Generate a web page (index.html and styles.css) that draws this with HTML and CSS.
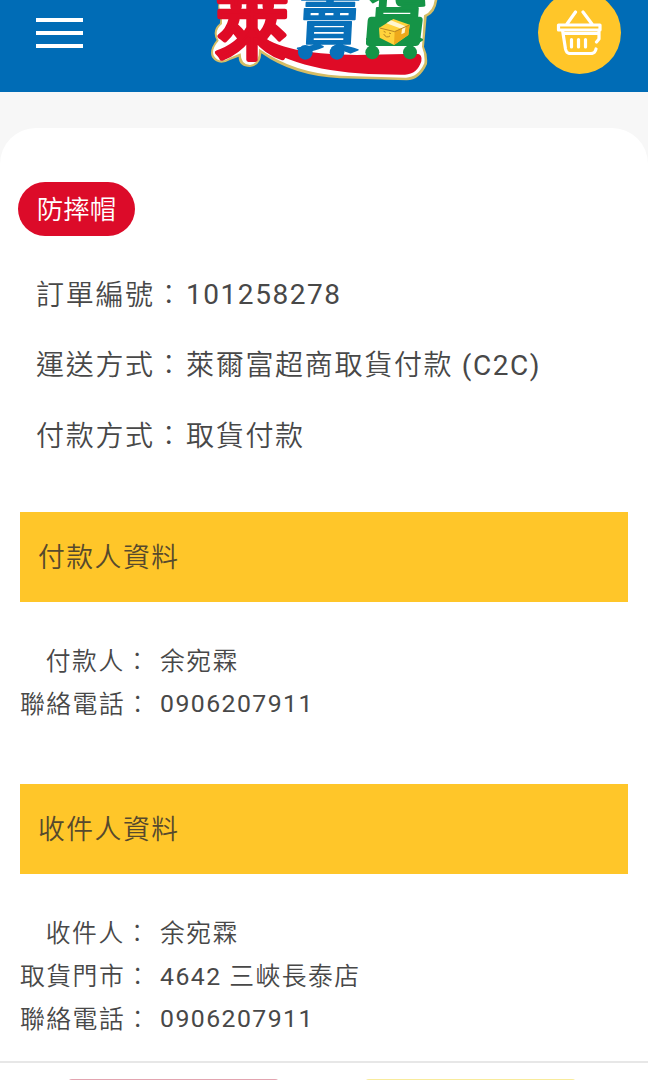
FILE: index.html
```html
<!DOCTYPE html>
<html lang="zh-Hant">
<head>
<meta charset="utf-8">
<meta name="viewport" content="width=device-width">
<title>萊賣貨</title>
<link rel="stylesheet" href="styles.css">
</head>
<body>
<div class="page">
  <header class="topbar">
    <div class="menu"><span></span><span></span><span></span></div>
    <svg class="logo" viewBox="0 0 750 276" aria-label="萊賣貨">
      <path class="logo-gold" d="M60 0 Q48 20 62 48 L60 70 Q34 92 50 120 Q26 150 36 172 Q56 200 90 180 L116 170 Q116 200 150 201 Q182 198 184 160 Q280 228 420 235 L620 241 Q660 240 681 192 Q684 165 672 140 L680 50 Q706 40 712 0Z"/>
      <path class="logo-white" d="M62 0 Q52 20 66 46 L66 72 Q40 92 56 122 Q32 150 42 168 Q58 192 88 174 L122 160 Q122 194 150 195 Q178 192 177 146 Q280 218 420 227 L618 233 Q654 232 673 190 Q676 165 666 140 L672 46 Q700 34 704 0Z"/>
      <path class="red" d="M181 106 C245 152 350 164 470 165 L650 161 Q668 162 664 184 Q652 222 615 224 C430 225 290 205 181 135Z"/>
      <g class="logo-text">
        <text class="red red-line" transform="translate(44 160) scale(1.02 1)">萊</text>
        <text class="blue blue-line" transform="translate(284 140) skewX(-3) scale(.9 .88)">賣</text>
        <text class="green green-line" transform="translate(492 114) skewX(-4) scale(.84 .84)">貨</text>
      </g>
      <g class="blue"><circle cx="316" cy="157" r="22"/><circle cx="411" cy="157" r="22"/></g>
      <path class="green" d="M514 50 H659 Q669 50 668 61 L660 127 Q658 138 646 138 H508 Q496 138 498 125 L503 62 Q504 50 514 50Z"/>
      <g class="green"><circle cx="517" cy="157" r="21"/><circle cx="630" cy="157" r="21"/></g>
      <path fill="#ffd23b" d="M537 84 L580 57 L629 74 L625 105 L582 135 L539 113Z"/>
      <path fill="#eea91b" d="M584 94 L629 74 L625 105 L582 135Z"/>
      <path fill="#fff6ce" d="M559 70 L606 87 L604 103 L614 98 L617 79 L573 61Z"/>
      <path fill="none" stroke="#b88522" stroke-width="3" d="M539 84 L584 95 L628 75 M551 94 l6 3 M567 99 l6 2 M551 102 Q559 116 570 108"/>
    </svg>
    <div class="cart">
      <svg viewBox="0 0 48 46">
        <path d="M11 15 L19.500 3 M27 3 L36 15 M2.500 16 H44 V21 H2.500Z M6.500 21 L9.500 40 Q10.500 44.500 14 44.500 H35 Q39 44.500 40 40 M43 21 V30 L40.500 33 M7 24.500 H43 M15.500 30.500 V38 M22.500 30.500 V38 M29.500 30.500 V38"/>
      </svg>
    </div>
  </header>
  <main class="card">
    <span class="badge">防摔帽</span>
    <dl class="summary">
      <div><dt>訂單編號<span class="colon">：</span></dt><dd class="latin">101258278</dd></div>
      <div><dt>運送方式<span class="colon">：</span></dt><dd>萊爾富超商取貨付款<span class="latin"> (C2C)</span></dd></div>
      <div><dt>付款方式<span class="colon">：</span></dt><dd>取貨付款</dd></div>
    </dl>
    <section>
      <h2>付款人資料</h2>
      <dl class="details">
        <div><dt>付款人<span class="colon">：</span></dt><dd>余宛霖</dd></div>
        <div><dt>聯絡電話<span class="colon">：</span></dt><dd class="latin">0906207911</dd></div>
      </dl>
    </section>
    <section>
      <h2>收件人資料</h2>
      <dl class="details">
        <div><dt>收件人<span class="colon">：</span></dt><dd>余宛霖</dd></div>
        <div><dt>取貨門市<span class="colon">：</span></dt><dd><span class="latin">4642 </span>三峽長泰店</dd></div>
        <div><dt>聯絡電話<span class="colon">：</span></dt><dd class="latin">0906207911</dd></div>
      </dl>
    </section>
  </main>
  <footer class="actions"><span class="action pink"></span><span class="action yellow"></span></footer>
</div>
</body>
</html>
```

FILE: styles.css
```css
* { box-sizing: border-box; }
body { margin: 0; background: #f7f7f7; color: #484848; font-family: Roboto, "Noto Sans CJK TC", sans-serif; font-weight: 350; }
dl, dd, h2 { margin: 0; }
.page { height: 1080px; overflow: hidden; display: flex; flex-direction: column; }
.topbar { height: 92px; flex: none; background: #006cb6; display: grid; grid-template-columns: 200px 250px 1fr; overflow: hidden; }
.menu { padding: 18px 0 0 36px; display: flex; flex-direction: column; gap: 9px; }
.menu span { width: 47px; height: 4px; background: #fff; }
.logo { display: block; width: 250px; height: 92px; }
.logo-gold { fill: #d4bd65; }
.logo-white { fill: #fff; }
.logo-text { font-family: "Noto Sans CJK TC", sans-serif; font-weight: 500; font-size: 220px; stroke-linejoin: round; }
.red { fill: #df0b26; }
.blue { fill: #0870b9; }
.green { fill: #159447; }
.red-line { stroke: #df0b26; stroke-width: 13; }
.blue-line { stroke: #0870b9; stroke-width: 5; }
.green-line { stroke: #159447; stroke-width: 8; }
.cart { width: 83px; height: 83px; margin: -9px 0 0 88px; border-radius: 50%; background: #ffc629; padding: 18px 0 0 18px; }
.cart svg { display: block; width: 48px; height: 46px; fill: none; stroke: #fff; stroke-width: 3.2; stroke-linecap: round; stroke-linejoin: round; }
.card { flex: none; height: 933px; margin-top: 36px; padding: 54px 20px 0; background: #fff; border-radius: 36px 36px 0 0; }
.badge { display: flex; align-items: center; justify-content: center; width: 117px; height: 54px; margin-left: -2px; padding-bottom: 3px; border-radius: 27px; background: #dc0b29; color: #fff; font-size: 26.5px; }
.latin { font-weight: 400; letter-spacing: 1.45px; }
.summary .latin { letter-spacing: 1.55px; }
.summary dd.latin, .details dd.latin { margin-top: -1px; }
.colon { font-weight: 300; }
.summary { padding: 24.5px 0 0 16px; font-size: 28px; letter-spacing: 1.7px; }
.summary div { display: flex; height: 70.5px; line-height: 70px; white-space: nowrap; }
.summary dt { width: 150px; }
h2 { height: 90px; padding-left: 18px; background: #ffc629; line-height: 92px; font-size: 26.8px; font-weight: 350; letter-spacing: 1.5px; color: #56492d; }
section { height: 272px; }
section:first-of-type { margin-top: 39.5px; }
.details { padding-top: 38px; font-size: 24.8px; letter-spacing: 1.5px; }
.details div { display: flex; height: 43px; line-height: 43px; }
.details dt { width: 131px; margin-right: 9px; text-align: right; white-space: nowrap; }
.actions { flex: none; height: 19px; border-top: 2px solid #e7e7e7; background: #fff; display: flex; padding: 16px 0 0 68px; gap: 86px; overflow: hidden; }
.action { width: 211px; height: 60px; flex: none; border-radius: 4px; }
.pink { background: #e3a4b0; }
.yellow { background: #f8eb9c; }
```
